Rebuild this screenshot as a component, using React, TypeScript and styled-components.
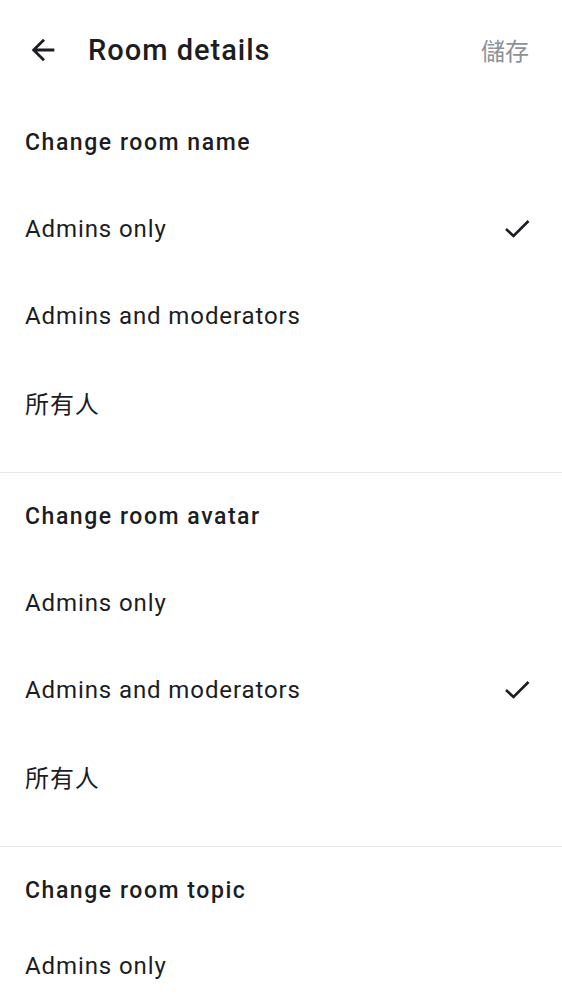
import React from 'react';
import styled, { createGlobalStyle } from 'styled-components';

const GlobalStyle = createGlobalStyle`
  html, body {
    margin: 0;
    padding: 0;
    background: #ffffff;
  }
  body {
    font-family: Roboto, "Noto Sans CJK TC", sans-serif;
    color: #1b1d22;
  }
`;

const Page = styled.div`
  width: 562px;
  height: 1000px;
  overflow: hidden;
  background: #ffffff;
`;

const TopBar = styled.div`
  height: 99px;
  display: flex;
  align-items: center;
  padding: 0 33px 0 26px;
`;

const BackBtn = styled.div`
  width: 34px;
  height: 34px;
  display: flex;
  align-items: center;
  justify-content: center;
  color: #1b1d22;
`;

const Title = styled.h1`
  flex: 1;
  margin: 0 0 0 28px;
  font-size: 29px;
  font-weight: 500;
  letter-spacing: 1px;
  line-height: 34px;
`;

const SaveBtn = styled.div`
  font-family: "Noto Sans CJK TC", sans-serif;
  font-size: 24px;
  color: #8d9199;
  line-height: 34px;
`;

const Section = styled.div<{ $divider?: boolean }>`
  padding-bottom: 26px;
  border-bottom: ${p => (p.$divider ? '1px solid #e9e9ee' : 'none')};
`;

const SectionTitle = styled.div<{ $short?: boolean }>`
  height: 86px;
  margin-bottom: ${p => (p.$short ? '-11px' : '0')};
  display: flex;
  align-items: center;
  padding: 0 25px;
  font-size: 23px;
  font-weight: 500;
  letter-spacing: 1.55px;
`;

const Option = styled.div`
  height: 87px;
  display: flex;
  align-items: center;
  justify-content: space-between;
  padding: 0 31px 0 25px;
  font-size: 24px;
  font-weight: 400;
  letter-spacing: 0.9px;
`;

const Check = () => (
  <svg width="28" height="28" viewBox="0 0 28 28" fill="none">
    <polyline
      points="3,10 10.5,17 25.5,2"
      stroke="#1b1d22"
      strokeWidth="2.6"
      strokeLinecap="butt"
      strokeLinejoin="miter"
      transform="translate(0 4)"
    />
  </svg>
);

const ArrowBack = () => (
  <svg width="34" height="34" viewBox="0 0 24 24">
    <path
      fill="currentColor"
      d="M20 11H7.83l5.59-5.59L12 4l-8 8 8 8 1.41-1.41L7.83 13H20v-2z"
    />
  </svg>
);

type Group = {
  title: string;
  selected: number;
};

const options = ['Admins only', 'Admins and moderators', '所有人'];

const groups: Group[] = [
  { title: 'Change room name', selected: 0 },
  { title: 'Change room avatar', selected: 1 },
  { title: 'Change room topic', selected: -1 },
];

const App = () => {
  return (
    <Page>
      <GlobalStyle />
      <TopBar>
        <BackBtn><ArrowBack /></BackBtn>
        <Title>Room details</Title>
        <SaveBtn>儲存</SaveBtn>
      </TopBar>

      {groups.map((g, i) => {
        const last = i === groups.length - 1;
        return (
          <Section key={g.title} $divider={!last}>
            <SectionTitle $short={last}>{g.title}</SectionTitle>
            {options.map((o, j) => (
              <Option key={o}>
                <span>{o}</span>
                {g.selected === j && <Check />}
              </Option>
            ))}
          </Section>
        );
      })}
    </Page>
  );
};

export default App;
